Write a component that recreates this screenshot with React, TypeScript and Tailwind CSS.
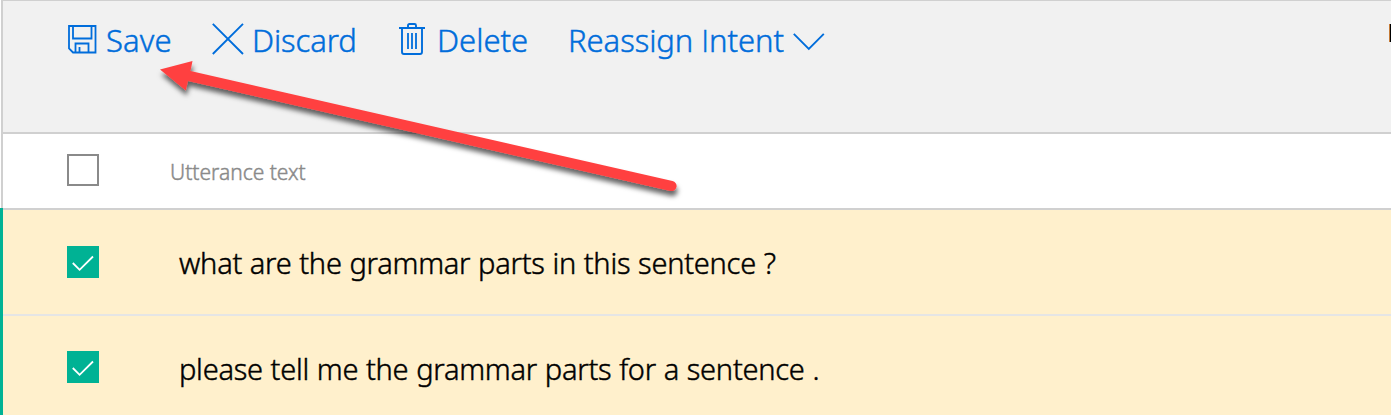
import type { ReactNode } from "react";

function SaveIcon() {
  return (
    <svg className="mt-[24px] h-[29px] w-[30px] shrink-0" viewBox="0 0 30 29" fill="none" stroke="#006ddb" strokeWidth="1.800">
      <path d="M2 1H28.500V27.500H6L2 23.500Z" />
      <path d="M6 1V13.500H24.500V1" />
      <path d="M8.500 27.500V18.500H21.500V27.500M12.500 27.500V22" />
    </svg>
  );
}

function DiscardIcon() {
  return (
    <svg className="mt-[22px] h-[32px] w-[32px] shrink-0" viewBox="0 0 32 32" fill="none" stroke="#006ddb" strokeWidth="1.900">
      <path d="M0.800 0.800L31 31M31 0.800L0.800 31" />
    </svg>
  );
}

function DeleteIcon() {
  return (
    <svg className="mt-[22px] h-[32px] w-[27px] shrink-0" viewBox="0 0 27 32" fill="none" stroke="#006ddb" strokeWidth="1.900">
      <path d="M0 5H26M9 5V2.500Q9 1 10.500 1H15.500Q17 1 17 2.500V5" />
      <path d="M3 5V29Q3 31 5 31H21Q23 31 23 29V5" />
      <path d="M9 10V26M13 10V26M17 10V26" strokeWidth="1.800" />
    </svg>
  );
}

function ChevronIcon() {
  return (
    <svg className="mt-[32px] h-[18px] w-[32px] shrink-0" viewBox="0 0 32 18" fill="none" stroke="#006ddb" strokeWidth="1.900">
      <path d="M0.800 0.900L15.800 15.900L30.800 0.900" />
    </svg>
  );
}

function Checked() {
  return (
    <div className="h-8 w-8 shrink-0 bg-[#00b294]">
      <svg className="h-8 w-8" viewBox="0 0 32 32" fill="none" stroke="#fff" strokeWidth="1.800">
        <path d="M5.800 17L12.600 23.800L26 10.500" />
      </svg>
    </div>
  );
}

function Row({ children, top }: { children: ReactNode; top: string }) {
  return (
    <div className={`flex h-[106px] border-b-2 border-[#e5e5e5] bg-[#fff0cc] pl-16 ${top}`}>
      <Checked />
      {children}
    </div>
  );
}

export default function App() {
  return (
    <div className="relative h-[415px] w-full overflow-hidden bg-white font-['Noto_Sans',sans-serif] font-light [-webkit-text-stroke:0.45px_currentColor]">
      <div className="ml-px h-[208px] border-l-2 border-t border-[#d0d0d0]">
        <div className="flex h-[133px] items-start border-b-2 border-[#d0d0d0] bg-[#f1f1f1] pl-[64px] text-[31px] leading-[40px] whitespace-nowrap text-[#006ddb]">
          <div className="flex w-[145px] gap-[9px]">
            <SaveIcon />
            <span className="mt-[19px] tracking-[0.1px]">Save</span>
          </div>
          <div className="flex w-[187px] gap-[8px]">
            <DiscardIcon />
            <span className="mt-[19px] tracking-[-0.1px]">Discard</span>
          </div>
          <div className="flex w-[169px] gap-[11px]">
            <DeleteIcon />
            <span className="mt-[19px]">Delete</span>
          </div>
          <div className="flex w-[257px] justify-between">
            <span className="mt-[19px] tracking-[-0.05px]">
              Reassign <span className="font-['Open_Sans',sans-serif]">I</span>ntent
            </span>
            <ChevronIcon />
          </div>
          <div className="mt-[23px] ml-auto h-[18px] w-[2px] border-l border-[#c47a36] bg-black" />
        </div>
        <div className="flex h-[74px] pl-16 pt-5">
          <div className="h-8 w-8 shrink-0 border-2 border-[#8a8a8a]" />
          <span className="ml-[71px] mt-[4px] text-[21px] leading-[28px] text-[#8a8a8a]">Utterance text</span>
        </div>
      </div>
      <div className="border-l-[3px] border-[#00b294] text-[29px] leading-[40px] tracking-[-0.25px] [word-spacing:0.5px] whitespace-nowrap text-black">
        <div className="h-[2px] bg-[#d0d0d0]" />
        <Row top="pt-[36px]">
          <span className="ml-[80px] mt-[-3px]">what are the grammar parts in this sentence ?</span>
        </Row>
        <Row top="pt-[35px]">
          <span className="ml-[80px] mt-[-2px]">please tell me the grammar parts for a sentence .</span>
        </Row>
      </div>
      <svg className="pointer-events-none absolute inset-0 h-[415px] w-[720px]" viewBox="0 0 720 415">
        <defs>
          <filter id="shadow" x="-10%" y="-10%" width="120%" height="130%">
            <feDropShadow dx="1" dy="5" stdDeviation="2.800" floodColor="#000" floodOpacity="0.6" />
          </filter>
        </defs>
        <path filter="url(#shadow)" fill="#ff4141" d="M160 69.500L192.500 61L190.500 71L672.500 181A5 5 0 0 1 670.500 191L188 81L185.800 90.500Z" />
      </svg>
    </div>
  );
}
